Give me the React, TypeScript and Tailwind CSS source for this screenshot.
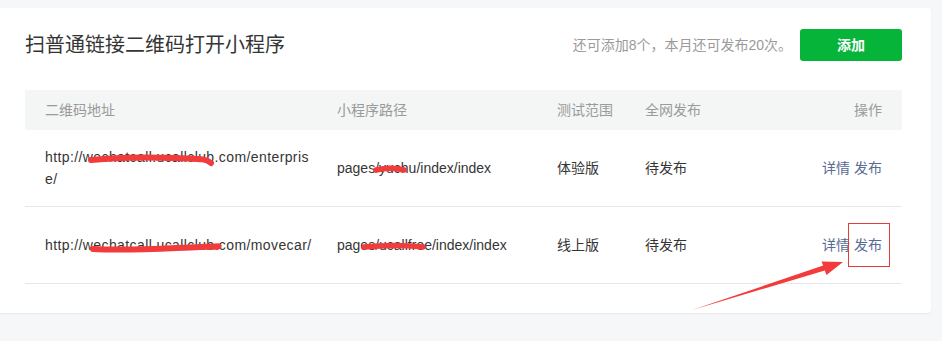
import React from 'react'

const font = { fontFamily: '"Liberation Sans", "Noto Sans CJK SC", sans-serif' }

const rows = [
  {
    url: 'http://wechatcall.ucallclub.com/enterprise/',
    path: 'pages/yuchu/index/index',
    test: '体验版',
    status: '待发布',
  },
  {
    url: 'http://wechatcall.ucallclub.com/movecar/',
    path: 'pages/ucallfree/index/index',
    test: '线上版',
    status: '待发布',
  },
]

function Marks() {
  return (
    <svg className="pointer-events-none absolute left-0 top-0" width="942" height="341" viewBox="0 0 942 341">
      <g stroke="#f23b3b" strokeLinecap="round" fill="none">
        <path d="M91 160 C120 157 150 157 175 158 S205 158 211 163" strokeWidth="6" />
        <path d="M93 249 C130 251 170 248 200 247 S214 246 217 247" strokeWidth="6" />
        <path d="M376 170 C385 168 396 168 404 170" strokeWidth="5.5" />
        <path d="M364 247 C385 245 405 245 423 247" strokeWidth="5.5" />
      </g>
      <rect x="848.5" y="223.5" width="41" height="43" fill="none" stroke="#e43c3c" strokeWidth="1" />
      <polygon
        points="692,310 824.8,270.4 826.5,275 843,262 821.5,261.4 823.2,265.6"
        fill="#f23b3b"
      />
    </svg>
  )
}

export default function App() {
  return (
    <div className="relative h-[341px] w-[942px] overflow-hidden bg-[#f6f7f9]" style={font}>
      <div className="mt-[8px] h-[305px] w-[931px] rounded-r-[4px] bg-white shadow-[0_1px_2px_rgba(0,0,0,0.07)]">
        <div className="flex items-center justify-between pl-[25px] pr-[29px] pt-[21px]">
          <h1 className="text-[20px] leading-[32px] text-[#353535]">扫普通链接二维码打开小程序</h1>
          <div className="flex items-center gap-[8px]">
            <span className="text-[14px] text-[#9a9a9a]">还可添加8个，本月还可发布20次。</span>
            <button className="h-[32px] w-[102px] rounded-[3px] bg-[#07b43a] text-[14px] font-bold text-white">
              添加
            </button>
          </div>
        </div>

        <div className="ml-[25px] mt-[29px] w-[877px] text-[14px]">
          <div className="flex h-[40px] items-center bg-[#f4f5f5] text-[#9a9a9a]">
            <div className="w-[292px] pl-[20px]">二维码地址</div>
            <div className="w-[220px] pl-[20px]">小程序路径</div>
            <div className="w-[88px] pl-[20px]">测试范围</div>
            <div className="flex-1 pl-[20px]">全网发布</div>
            <div className="pr-[20px]">操作</div>
          </div>
          {rows.map((r) => (
            <div key={r.url} className="flex h-[77px] items-center border-b border-[#e7e7e7] text-[#353535]">
              <div className="w-[292px] break-all pl-[20px] pr-[5px] leading-[22px] tracking-[0.4px]">{r.url}</div>
              <div className="w-[220px] pl-[20px]">{r.path}</div>
              <div className="w-[88px] pl-[20px]">{r.test}</div>
              <div className="flex-1 pl-[20px]">{r.status}</div>
              <div className="flex gap-[4px] pr-[20px] text-[#576b95]">
                <span>详情</span>
                <span>发布</span>
              </div>
            </div>
          ))}
        </div>
      </div>
      <Marks />
    </div>
  )
}
